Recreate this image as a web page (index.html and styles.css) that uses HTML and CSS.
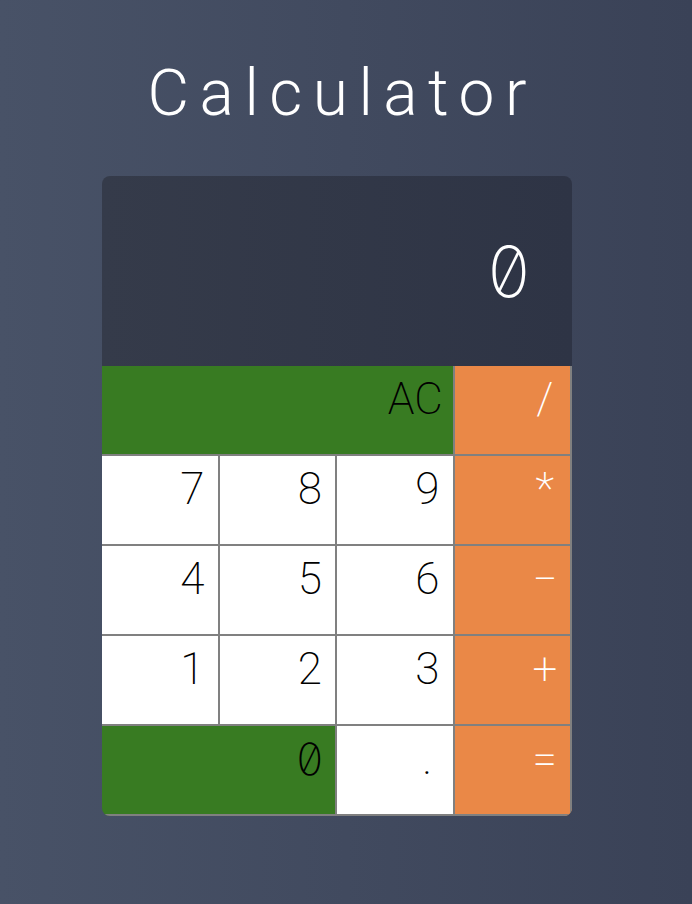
FILE: index.html
```html
<!DOCTYPE html>
<html lang="en">
<head>
<meta charset="utf-8">
<title>Calculator</title>
<link rel="stylesheet" href="styles.css">
</head>
<body>
<div class="page">
  <h1 class="title">Calculator</h1>
  <div class="calc">
    <div class="display"><span class="zero">0</span></div>
    <div class="keys">
      <button class="key key-green key-wide3"><span class="lbl lbl-2">AC</span></button>
      <button class="key key-op"><span class="lbl">/</span></button>
      <button class="key"><span class="lbl">7</span></button>
      <button class="key"><span class="lbl">8</span></button>
      <button class="key"><span class="lbl">9</span></button>
      <button class="key key-op"><span class="lbl">*</span></button>
      <button class="key"><span class="lbl">4</span></button>
      <button class="key"><span class="lbl">5</span></button>
      <button class="key"><span class="lbl">6</span></button>
      <button class="key key-op"><span class="lbl">−</span></button>
      <button class="key"><span class="lbl">1</span></button>
      <button class="key"><span class="lbl">2</span></button>
      <button class="key"><span class="lbl">3</span></button>
      <button class="key key-op"><span class="lbl">+</span></button>
      <button class="key key-green key-wide2"><span class="lbl zero">0</span></button>
      <button class="key"><span class="lbl">.</span></button>
      <button class="key key-op"><span class="lbl">=</span></button>
    </div>
  </div>
</div>
</body>
</html>
```

FILE: styles.css
```css
html, body {
  margin: 0;
  padding: 0;
}

body {
  min-height: 904px;
  background: linear-gradient(to right, #485267, #3a4257);
  font-family: Roboto, "Liberation Sans", sans-serif;
}

.page {
  width: 674px;
  display: flex;
  flex-direction: column;
  align-items: center;
}

.title {
  margin: 0;
  padding-top: 62px;
  font-size: 64px;
  font-weight: 300;
  line-height: 64px;
  color: #ffffff;
  letter-spacing: 10.5px;
  text-indent: 10.5px;
}

.calc {
  margin-top: 50px;
  width: 470px;
  border-radius: 8px;
  overflow: hidden;
}

.display {
  height: 190px;
  background: linear-gradient(to right, #353b4a, #2e3445);
  display: flex;
  align-items: center;
  justify-content: flex-end;
  padding-right: 42px;
  box-sizing: border-box;
  color: #ffffff;
  font-size: 70px;
  font-weight: 200;
}

.zero {
  font-family: Inter, Roboto, sans-serif;
  font-feature-settings: "zero" 1;
  font-weight: 200;
}

.keys {
  display: grid;
  grid-template-columns: repeat(4, 1fr);
  grid-auto-rows: 90px;
}

.key {
  margin: 0;
  border: 0;
  border-right: 2px solid #808080;
  border-bottom: 2px solid #808080;
  border-radius: 0;
  background: #ffffff;
  color: #000000;
  font-family: Roboto, "Liberation Sans", sans-serif;
  font-size: 44px;
  font-weight: 200;
  line-height: 1;
  text-align: right;
  padding: 11px 12px 0 0;
  display: flex;
  align-items: flex-start;
  justify-content: flex-end;
  cursor: pointer;
}

.key-green {
  background: #387b22;
}

.key-op {
  background: #ea8847;
  color: #ffffff;
}

.key-wide3 {
  grid-column: span 3;
}

.key-wide2 {
  grid-column: span 2;
}

.lbl {
  display: inline-block;
  width: 0.6em;
  text-align: center;
}

.lbl-2 {
  width: 1.2em;
}
```
